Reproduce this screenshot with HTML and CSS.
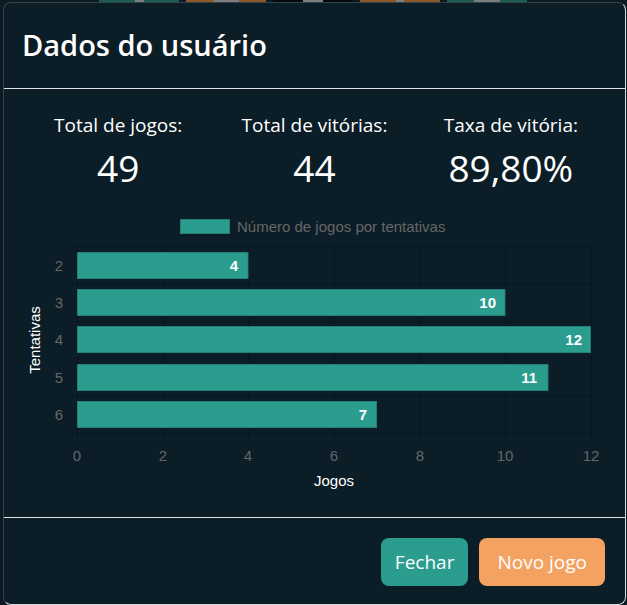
FILE: index.html
```html
<!DOCTYPE html>
<html lang="pt-BR">
<head>
<meta charset="utf-8">
<title>Dados do usuário</title>
<link rel="stylesheet" href="styles.css">
</head>
<body>
<div class="board">
  <div class="tile tile-green"><span class="mark mark-1"></span></div>
  <div class="tile tile-orange"><span class="mark mark-2"></span></div>
  <div class="tile tile-dark"><span class="mark mark-3"></span></div>
  <div class="tile tile-orange"><span class="mark mark-4"></span></div>
  <div class="tile tile-green"><span class="mark mark-5"></span></div>
</div>

<div class="modal" role="dialog" aria-labelledby="modal-title">
  <div class="modal-header">
    <h2 class="modal-title" id="modal-title">Dados do usuário</h2>
  </div>
  <div class="modal-body">
    <div class="stats">
      <div class="stat">
        <div class="stat-label">Total de jogos:</div>
        <div class="stat-value">49</div>
      </div>
      <div class="stat">
        <div class="stat-label">Total de vitórias:</div>
        <div class="stat-value">44</div>
      </div>
      <div class="stat">
        <div class="stat-label">Taxa de vitória:</div>
        <div class="stat-value">89,80%</div>
      </div>
    </div>
    <svg class="chart" viewBox="20 210 589 290" width="589" height="290" xmlns="http://www.w3.org/2000/svg">
      <g class="legend">
        <rect x="180.5" y="219.5" width="49" height="14" class="bar"/>
        <text x="237" y="232" class="tick">Número de jogos por tentativas</text>
      </g>
      <g class="grid">
        <line x1="77.5" y1="246" x2="77.5" y2="442"/>
        <line x1="163.5" y1="246" x2="163.5" y2="442"/>
        <line x1="248.5" y1="246" x2="248.5" y2="442"/>
        <line x1="334.5" y1="246" x2="334.5" y2="442"/>
        <line x1="420.5" y1="246" x2="420.5" y2="442"/>
        <line x1="505.5" y1="246" x2="505.5" y2="442"/>
        <line x1="591.5" y1="246" x2="591.5" y2="442"/>
        <line x1="67" y1="246.5" x2="592" y2="246.5"/>
        <line x1="67" y1="284.5" x2="592" y2="284.5"/>
        <line x1="67" y1="321.5" x2="592" y2="321.5"/>
        <line x1="67" y1="358.5" x2="592" y2="358.5"/>
        <line x1="67" y1="396.5" x2="592" y2="396.5"/>
        <line x1="67" y1="433.5" x2="592" y2="433.5"/>
      </g>
      <g class="bars">
        <rect x="77.5" y="252.5" width="170.5" height="26" class="bar"/>
        <rect x="77.5" y="289.5" width="427.5" height="26" class="bar"/>
        <rect x="77.5" y="326.5" width="513" height="26" class="bar"/>
        <rect x="77.5" y="364.5" width="470.5" height="26" class="bar"/>
        <rect x="77.5" y="401.5" width="299" height="26" class="bar"/>
      </g>
      <g class="values">
        <text x="238" y="271">4</text>
        <text x="496" y="308">10</text>
        <text x="582" y="345">12</text>
        <text x="537" y="383">11</text>
        <text x="367" y="420">7</text>
      </g>
      <g class="yticks">
        <text x="63" y="270.5">2</text>
        <text x="63" y="307.9">3</text>
        <text x="63" y="345.3">4</text>
        <text x="63" y="382.7">5</text>
        <text x="63" y="420.1">6</text>
      </g>
      <g class="xticks">
        <text x="77" y="461">0</text>
        <text x="163" y="461">2</text>
        <text x="248" y="461">4</text>
        <text x="334" y="461">6</text>
        <text x="420" y="461">8</text>
        <text x="505" y="461">10</text>
        <text x="591" y="461">12</text>
      </g>
      <text class="axis-title" transform="translate(39.5 340) rotate(-90)" x="0" y="0">Tentativas</text>
      <text class="axis-title" x="334" y="486">Jogos</text>
    </svg>
  </div>
  <div class="modal-footer">
    <button type="button" class="btn btn-close">Fechar</button>
    <button type="button" class="btn btn-new">Novo jogo</button>
  </div>
</div>
</body>
</html>
```

FILE: styles.css
```css
* {
  box-sizing: border-box;
}

html,
body {
  margin: 0;
  height: 100%;
}

body {
  background: #0c1a21;
  color: #ffffff;
  font-family: "Open Sans", "Noto Sans", sans-serif;
  overflow: hidden;
}

/* game board behind the dialog */
.board {
  display: flex;
  gap: 7px;
  padding-left: 99px;
}

.tile {
  width: 80px;
  height: 40px;
  display: flex;
  justify-content: center;
}

.tile-green {
  background: #1d5c52;
}

.tile-orange {
  background: #8e5a2c;
}

.tile-dark {
  background: #05090c;
}

.mark {
  display: block;
  height: 4px;
  background: #7b7f80;
}

.mark-1 { width: 9px; }
.mark-2 { width: 25px; }
.mark-3 { width: 20px; }
.mark-4 { width: 8px; }
.mark-5 { width: 26px; }

/* dialog */
.modal {
  position: fixed;
  top: 2px;
  left: 3px;
  width: 623px;
  display: flex;
  flex-direction: column;
  background: #0b1d27;
  border: 1px solid;
  border-color: #33424a #d6dadc #d6dadc #33424a;
  border-radius: 8px;
}

.modal-header {
  height: 86px;
  display: flex;
  align-items: center;
  padding: 0 18px;
  border-bottom: 1px solid #dee2e6;
}

.modal-title {
  margin: 0;
  font-size: 29px;
  font-weight: 600;
  line-height: 1.2;
}

.modal-body {
  padding: 24px 16px 17px;
}

.stats {
  display: grid;
  grid-template-columns: repeat(3, 1fr);
  text-align: center;
}

.stat-label {
  font-size: 19px;
  line-height: 24px;
}

.stat-value {
  margin-top: 7px;
  font-size: 37px;
  line-height: 48px;
}

.chart {
  display: block;
  margin-top: 18px;
  font-family: "Liberation Sans", Arial, sans-serif;
  font-size: 15px;
}

.chart .bar {
  fill: #2a9d8f;
  stroke: #237f74;
  stroke-width: 1;
}

.chart .grid line {
  stroke: rgba(0, 0, 0, 0.22);
  stroke-width: 1;
  shape-rendering: crispEdges;
}

.chart .tick,
.chart .yticks text,
.chart .xticks text {
  fill: #666666;
}

.chart .yticks text {
  text-anchor: end;
}

.chart .xticks text {
  text-anchor: middle;
}

.chart .values text {
  fill: #ffffff;
  font-weight: bold;
  text-anchor: end;
}

.chart .axis-title {
  fill: #ffffff;
  text-anchor: middle;
}

.modal-footer {
  display: flex;
  justify-content: flex-end;
  gap: 11px;
  padding: 20px 20px 18px;
  border-top: 1px solid #dee2e6;
}

.btn {
  height: 48px;
  padding: 0 15px;
  border: 0;
  border-radius: 8px;
  color: #ffffff;
  font-family: "Open Sans", "Noto Sans", sans-serif;
  font-size: 19px;
  line-height: 48px;
  cursor: pointer;
}

.btn-close {
  background: #2a9d8f;
  padding: 0 14px;
}

.btn-new {
  background: #f4a261;
  padding: 0 18px;
}
```
